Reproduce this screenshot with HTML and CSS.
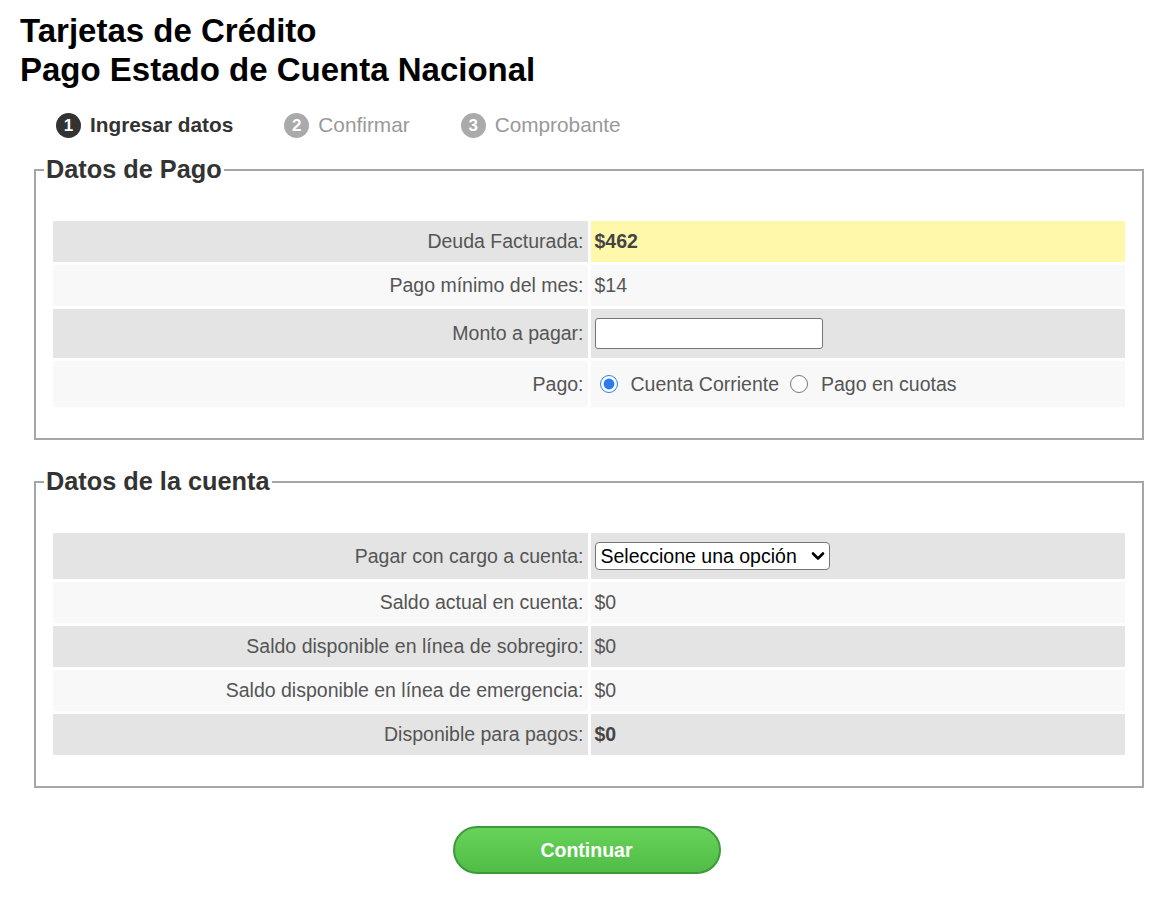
FILE: index.html
```html
<!DOCTYPE html>
<html lang="es">
<head>
<meta charset="utf-8">
<title>Pago Estado de Cuenta Nacional</title>
<link rel="stylesheet" href="styles.css">
</head>
<body>
<div class="page">
  <h1 class="title">Tarjetas de Crédito<br>Pago Estado de Cuenta Nacional</h1>
  <ol class="steps">
    <li class="step active"><span class="num">1</span>Ingresar datos</li>
    <li class="step"><span class="num">2</span>Confirmar</li>
    <li class="step"><span class="num">3</span>Comprobante</li>
  </ol>

  <fieldset class="box">
    <legend class="box-title">Datos de Pago</legend>
    <table class="grid">
      <tr class="odd"><td class="lbl">Deuda Facturada:</td><td class="val hl"><b>$462</b></td></tr>
      <tr class="even"><td class="lbl">Pago mínimo del mes:</td><td class="val">$14</td></tr>
      <tr class="odd"><td class="lbl">Monto a pagar:</td><td class="val"><div class="field"><input class="text-input" type="text"></div></td></tr>
      <tr class="even"><td class="lbl">Pago:</td><td class="val"><div class="field radios">
        <label class="opt"><input class="radio" type="radio" name="pago" checked>Cuenta Corriente</label>
        <label class="opt"><input class="radio" type="radio" name="pago">Pago en cuotas</label>
      </div></td></tr>
    </table>
  </fieldset>

  <fieldset class="box second">
    <legend class="box-title">Datos de la cuenta</legend>
    <table class="grid">
      <tr class="odd"><td class="lbl">Pagar con cargo a cuenta:</td><td class="val"><div class="field"><span class="select-wrap"><select class="select"><option>Seleccione una opción</option></select><svg class="chev" width="14" height="10" viewBox="0 0 14 10"><path d="M2 2.5 L7 7.5 L12 2.5" fill="none" stroke="#000" stroke-width="2.6" stroke-linecap="round" stroke-linejoin="round"/></svg></span></div></td></tr>
      <tr class="even"><td class="lbl">Saldo actual en cuenta:</td><td class="val">$0</td></tr>
      <tr class="odd"><td class="lbl">Saldo disponible en línea de sobregiro:</td><td class="val">$0</td></tr>
      <tr class="even"><td class="lbl">Saldo disponible en línea de emergencia:</td><td class="val">$0</td></tr>
      <tr class="odd"><td class="lbl">Disponible para pagos:</td><td class="val"><b>$0</b></td></tr>
    </table>
  </fieldset>

  <div class="actions">
    <button class="btn" type="button">Continuar</button>
  </div>
</div>
</body>
</html>
```

FILE: styles.css
```css
* { box-sizing: border-box; }
html, body { margin: 0; padding: 0; background: #fff; }
body { font-family: "Liberation Sans", Arial, sans-serif; color: #555; }

.page { padding: 11px 20px 20px 20px; }

.title {
  margin: 0;
  font-size: 33px;
  line-height: 39px;
  font-weight: bold;
  color: #000;
}

.steps {
  list-style: none;
  margin: 23px 0 17px 36px;
  padding: 0;
  display: flex;
  align-items: center;
  gap: 51px;
}
.step {
  display: flex;
  align-items: center;
  gap: 9px;
  font-size: 20.8px;
  line-height: 26px;
  color: #999;
}
.step .num {
  width: 25px;
  height: 25px;
  border-radius: 50%;
  background: #aaa;
  color: #fff;
  font-weight: bold;
  font-size: 17px;
  line-height: 25px;
  text-align: center;
}
.step.active { color: #333; font-weight: bold; }
.step.active .num { background: #333; }

.box {
  margin: 0 9px 0 14px;
  padding: 34px 8px 28px 8px;
  border: 2px solid #a6a6a6;
  min-width: 0;
}
.box.second { margin-top: 27px; }
.box-title {
  padding: 0 2px;
  font-size: 25.3px;
  line-height: 29px;
  font-weight: bold;
  color: #333;
}

.grid {
  width: calc(100% - 12px);
  margin: 0 6px;
  border-spacing: 3px;
  font-size: 19.5px;
  line-height: 23px;
  color: #555;
}
.grid td { width: 50%; padding: 9px 4px; vertical-align: middle; }
.grid .lbl { text-align: right; }
.grid .val { text-align: left; }
.grid b { color: #444; }
.odd td { background: #e4e4e4; }
.even td { background: #f8f8f8; }
.grid td.hl { background: #fff8ab; }

.field { display: flex; align-items: center; }
.radios { min-height: 28px; }
.text-input {
  width: 228px;
  height: 31px;
  border: 1px solid #767676;
  border-radius: 3px;
  background: #fff;
  font: inherit;
  padding: 0 4px;
}
.opt {
  display: inline-flex;
  align-items: center;
  gap: 13px;
  margin-right: 11px;
}
.radio {
  width: 18px;
  height: 18px;
  margin: 0 0 0 5px;
  accent-color: #2b7bf5;
}
.opt + .opt .radio { margin-left: 0; }

.select-wrap { position: relative; display: inline-block; }
.select {
  -webkit-appearance: none;
  appearance: none;
  width: 235px;
  height: 28px;
  border: 1px solid #767676;
  border-radius: 4px;
  background: #fff;
  color: #000;
  font-family: "Liberation Sans", Arial, sans-serif;
  font-size: 19.5px;
  padding: 0 26px 0 5px;
}
.chev { position: absolute; right: 5px; top: 9px; pointer-events: none; }

.actions { display: flex; justify-content: center; margin-top: 38px; }
.btn {
  width: 268px;
  height: 48px;
  border: 2px solid #3d9a3a;
  border-radius: 24px;
  background: linear-gradient(#68d35a, #52bd46);
  color: #fff;
  font-family: "Liberation Sans", Arial, sans-serif;
  font-size: 19.5px;
  font-weight: bold;
  cursor: pointer;
}
```
